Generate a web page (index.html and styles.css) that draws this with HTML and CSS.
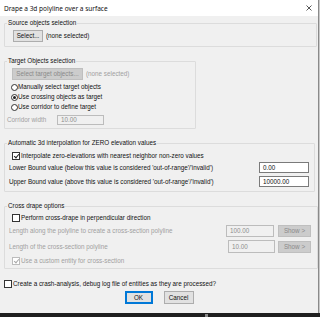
FILE: index.html
```html
<!DOCTYPE html>
<html lang="en">
<head>
    <meta charset="UTF-8">
    <title>Drape a 3d polyline over a surface</title>
    <link rel="stylesheet" href="styles.css">
</head>
<body>
    <div class="window">
        <div class="titlebar">
            <span class="title-text">Drape a 3d polyline over a surface</span>
            <svg class="close" width="6" height="6" viewBox="0 0 6 6">
                <path d="M0.5 0.5 L5.5 5.5 M5.5 0.5 L0.5 5.5" stroke="#444" stroke-width="0.9"/>
            </svg>
        </div>

        <div class="content">
            <!-- Source objects -->
            <div class="group group-source">
                <div class="group-title">Source objects selection</div>
                <div class="row">
                    <button class="btn btn-select">Select...</button>
                    <span class="note">(none selected)</span>
                </div>
            </div>

            <!-- Target objects -->
            <div class="group group-target">
                <div class="group-title">Target Objects selection</div>
                <div class="row">
                    <button class="btn btn-target" disabled>Select target objects...</button>
                    <span class="note disabled">(none selected)</span>
                </div>
                <div class="radio-row first"><span class="radio"></span>Manually select target objects</div>
                <div class="radio-row"><span class="radio checked"></span>Use crossing objects as target</div>
                <div class="radio-row"><span class="radio"></span>Use corridor to define target</div>
                <div class="corridor-row">
                    <span class="corridor-label disabled">Corridor width</span>
                    <span class="field field-disabled field-corridor">10.00</span>
                </div>
            </div>

            <!-- Interpolation -->
            <div class="group group-interp">
                <div class="group-title">Automatic 3d interpolation for ZERO elevation values</div>
                <div class="check-row check-first"><span class="check checked"></span>Interpolate zero-elevations with nearest neighbor non-zero values</div>
                <div class="value-row lower">
                    <span>Lower Bound value (below this value is considered 'out-of-range'/'invalid')</span>
                    <span class="field field-value">0.00</span>
                </div>
                <div class="value-row upper">
                    <span>Upper Bound value (above this value is considered 'out-of-range'/'invalid')</span>
                    <span class="field field-value">10000.00</span>
                </div>
            </div>

            <!-- Cross drape -->
            <div class="group group-cross">
                <div class="group-title">Cross drape options</div>
                <div class="check-row check-first"><span class="check"></span>Perform cross-drape in perpendicular direction</div>
                <div class="show-row first">
                    <span class="show-label disabled">Length along the polyline to create a cross-section polyline</span>
                    <span class="field field-disabled field-along">100.00</span>
                    <button class="btn btn-show" disabled>Show &gt;</button>
                </div>
                <div class="show-row second">
                    <span class="show-label disabled">Length of the cross-section polyline</span>
                    <span class="field field-disabled field-length">10.00</span>
                    <button class="btn btn-show" disabled>Show &gt;</button>
                </div>
                <div class="check-row check-custom disabled"><span class="check checked check-disabled"></span>Use a custom entity for cross-section</div>
            </div>

            <div class="check-row crash"><span class="check"></span>Create a crash-analysis, debug log file of entities as they are processed?</div>

            <div class="actions">
                <button class="btn btn-ok">OK</button>
                <button class="btn btn-cancel">Cancel</button>
            </div>
        </div>
    </div>
    <div class="taskbar"><span class="taskbar-mark"></span></div>
</body>
</html>
```

FILE: styles.css
```css
body {
    margin: 0;
    padding: 0;
    font-family: "Liberation Sans", Arial, sans-serif;
    font-size: 6.3px;
    line-height: 8px;
    color: #111;
    background-color: #c9c9c9;
    overflow: hidden;
}

.window {
    width: 318px;
    height: 313px;
    background-color: #f0f0f0;
    border-right: 1px solid #8a8a8a;
    overflow: hidden;
}

.titlebar {
    height: 16px;
    background-color: #fff;
    display: flex;
    align-items: center;
    justify-content: space-between;
    padding: 0 6px 0 4px;
    white-space: nowrap;
}

.title-text {
    font-family: "Noto Sans", sans-serif;
    font-size: 6.5px;
    margin-top: 2px;
}

.close {
    display: block;
    margin-top: -1px;
}

.content {
    padding: 0 4px;
}

/* group boxes */
.group {
    border: 1px solid #dcdcdc;
    border-radius: 1px;
    padding: 0 0 0 8px;
    margin-top: 14px;
}

.group-title {
    width: max-content;
    height: 8px;
    margin: -5px 0 0 -6px;
    padding: 0 1px;
    background-color: #f0f0f0;
    white-space: nowrap;
}

.group-source {
    width: 303px;
    margin-top: 7px;
    padding-bottom: 4px;
}

.group-target {
    width: 183px;
    padding-left: 7px;
    padding-bottom: 3px;
}

.group-target .group-title {
    margin-left: -5px;
}

.group-interp {
    width: 302px;
    padding-left: 2px;
    padding-right: 5px;
    padding-bottom: 4px;
}

.group-cross {
    width: 302px;
    padding-left: 4px;
    padding-right: 6px;
    padding-bottom: 2px;
}

.group-interp .group-title {
    margin-left: 0;
}

.group-cross .group-title {
    margin-left: -2px;
}

.row {
    display: flex;
    align-items: center;
    margin-top: 3px;
    height: 12px;
}

.note {
    margin-left: 3px;
}

.disabled {
    color: #a0a0a0;
}

/* buttons */
.btn {
    box-sizing: border-box;
    font-family: inherit;
    font-size: 6.3px;
    color: #111;
    background-color: #e1e1e1;
    border: 1px solid #adadad;
    padding: 0;
    margin: 0;
    height: 12px;
    line-height: 10px;
    text-align: center;
    white-space: nowrap;
    flex-shrink: 0;
}

.btn:disabled {
    background-color: #cccccc;
    border-color: #bfbfbf;
    color: #8a8a8a;
}

.btn-select {
    width: 30px;
}

.btn-target {
    width: 71px;
}

.btn-show {
    width: 33px;
}

.btn-ok {
    width: 28px;
    height: 13px;
    border: 1px solid #0078d7;
    box-shadow: inset 0 0 0 1px #0078d7;
}

.btn-cancel {
    width: 30px;
    height: 13px;
}

/* radios */
.radio-row {
    display: flex;
    align-items: center;
    height: 10px;
    margin-left: -1px;
    white-space: nowrap;
}

.radio-row.first {
    margin-top: 2px;
}

.radio {
    box-sizing: border-box;
    width: 7px;
    height: 7px;
    border: 1px solid #333;
    border-radius: 50%;
    background-color: #fff;
    position: relative;
    flex-shrink: 0;
}

.radio.checked::after {
    content: "";
    position: absolute;
    left: 1px;
    top: 1px;
    width: 3px;
    height: 3px;
    border-radius: 50%;
    background-color: #222;
}

.corridor-row {
    display: flex;
    align-items: center;
    height: 10px;
    margin-top: 3px;
    margin-left: -5px;
}

.corridor-label {
    width: 50px;
    white-space: nowrap;
}

/* fields */
.field {
    display: flex;
    align-items: center;
    box-sizing: border-box;
    background-color: #fff;
    border: 1px solid #7a7a7a;
    padding-left: 3px;
    flex-shrink: 0;
}

.field-disabled {
    background-color: #f0f0f0;
    border-color: #bcbcbc;
    color: #8d8d8d;
}

.field-corridor {
    width: 47px;
    height: 10px;
}

.field-value {
    width: 50px;
    height: 11px;
}

.field-along {
    width: 48px;
    height: 12px;
    margin-right: 4px;
}

.field-length {
    width: 47px;
    height: 13px;
    margin-right: 3px;
}

/* checkboxes */
.check-row {
    display: flex;
    align-items: center;
    height: 11px;
    white-space: nowrap;
}

.check-first {
    margin-top: 2px;
}

.group-interp .check-first {
    margin-top: 3px;
    margin-left: 5px;
}

.group-cross .check-first,
.check-custom {
    margin-left: 3px;
}

.check {
    box-sizing: border-box;
    width: 8px;
    height: 8px;
    border: 1px solid #333;
    background-color: #fff;
    margin-right: 1px;
    position: relative;
    flex-shrink: 0;
}

.check.checked::after {
    content: "";
    position: absolute;
    left: 2px;
    top: 0;
    width: 2px;
    height: 4px;
    border: solid #222;
    border-width: 0 1px 1px 0;
    transform: rotate(40deg);
}

.check-disabled {
    border-color: #bcbcbc;
}

.check-disabled.checked::after {
    border-color: #a8a8a8;
}

.check-custom {
    margin-top: 2px;
}

.value-row {
    display: flex;
    align-items: center;
    justify-content: space-between;
    height: 11px;
    padding-left: 2px;
    white-space: nowrap;
}

.value-row.lower {
    margin-top: 1px;
}

.value-row.upper {
    margin-top: 3px;
}

.show-row {
    display: flex;
    align-items: center;
    height: 13px;
    white-space: nowrap;
}

.show-row.first {
    margin-top: 1px;
}

.show-row.second {
    margin-top: 3px;
}

.show-label {
    flex: 1;
}

.crash {
    margin-top: 9px;
}

.actions {
    display: flex;
    justify-content: center;
    gap: 11px;
    margin-top: 2px;
}

.taskbar {
    height: 4px;
    background-color: #1f1f1f;
    position: relative;
}

.taskbar-mark {
    position: absolute;
    left: 205px;
    top: 1px;
    width: 3px;
    height: 3px;
    background-color: #888;
}
```
